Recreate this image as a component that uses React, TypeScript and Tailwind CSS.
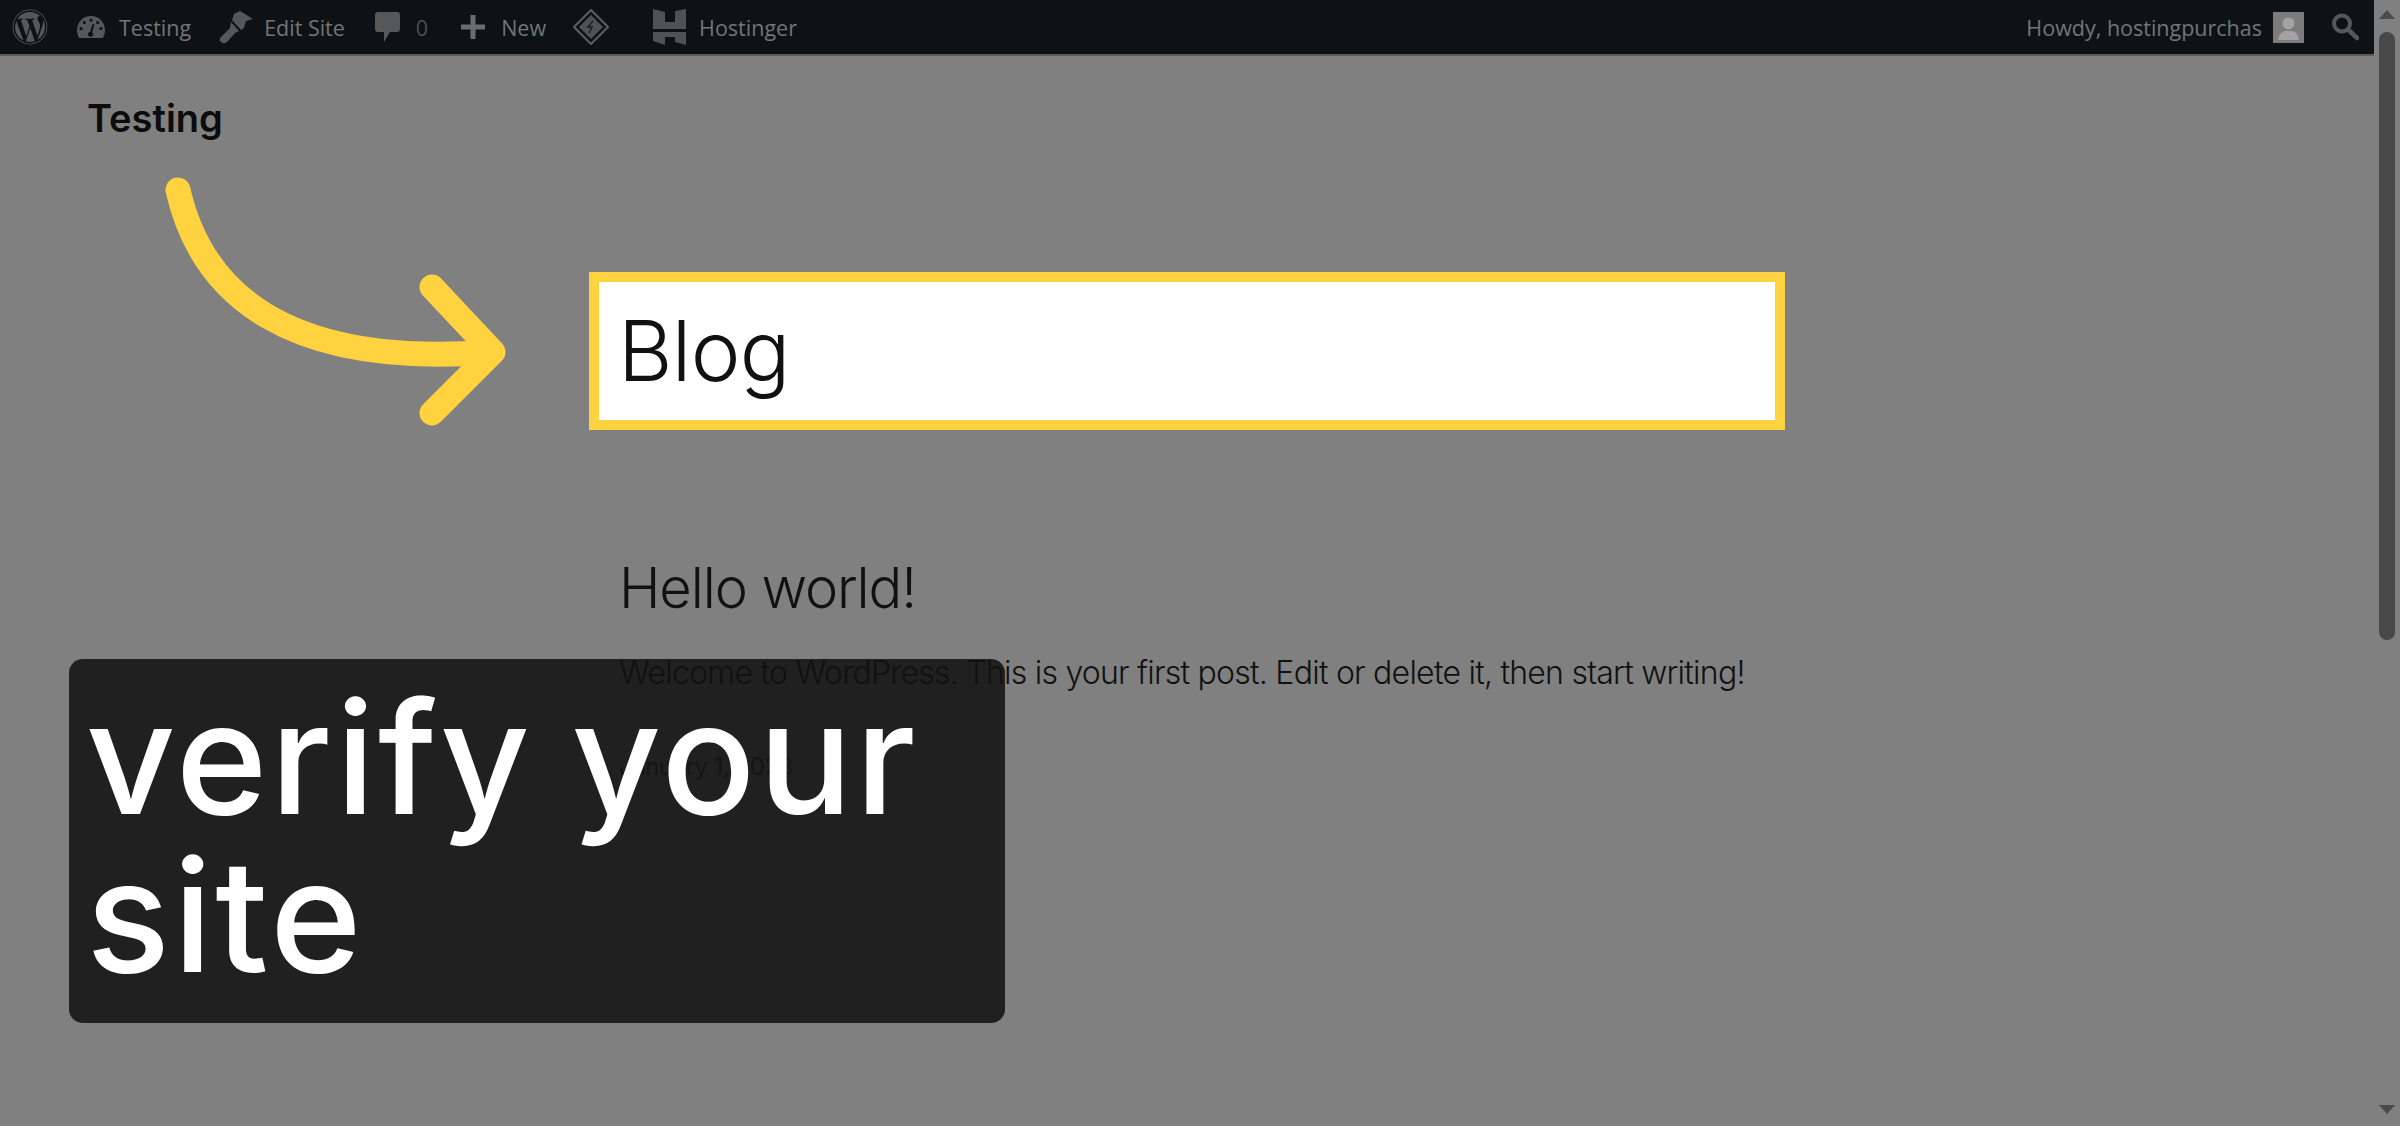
import React from 'react';
import { FaWordpress } from 'react-icons/fa';

const GaugeIcon = () => (
  <svg viewBox="0 0 28 24" className="ml-[29px] h-[24px] w-[28px] text-[#565759]" fill="currentColor">
    <path
      fillRule="evenodd"
      d="M14 1C6.3 1 0 7.2 0 15c0 2.900 .8 5.700 2.200 8h23.600C27.200 20.700 28 17.900 28 15 28 7.200 21.700 1 14 1zM14 3.500a1.600 1.600 0 1 1 0 3.200 1.600 1.600 0 0 1 0-3.200zM7.300 6a1.600 1.600 0 1 1 0 3.200 1.600 1.600 0 0 1 0-3.200zM20.700 6a1.600 1.600 0 1 1 0 3.200 1.600 1.600 0 0 1 0-3.200zM4 12a1.600 1.600 0 1 1 0 3.200A1.600 1.600 0 0 1 4 12zM24 12a1.600 1.600 0 1 1 0 3.200 1.600 1.600 0 0 1 0-3.200zM17.400 9.500l-2.200 7.700a2.600 2.600 0 1 1-2.100-.5l2.500-7.700z"
    />
  </svg>
);

const BrushIcon = () => (
  <svg viewBox="0 0 34 34" className="ml-[28px] h-[34px] w-[34px] text-[#565759]" fill="currentColor">
    <path d="M15 4 L21 1 L34 9 L27 11 L25 18 L22 20 L13 10 Z" />
    <path d="M12 12 L20 21 L16 23 L8 32 Q4 35 1 31 Q0 29 2 27 L11 18 Z" />
  </svg>
);

const CommentIcon = () => (
  <svg viewBox="0 0 25 32" className="ml-[30px] h-[32px] w-[25px] text-[#565759]" fill="currentColor">
    <path d="M3 1h19q3 0 3 3v14q0 3-3 3h-7l-6 10v-10H3q-3 0-3-3V4q0-3 3-3z" />
  </svg>
);

const DiamondIcon = () => (
  <svg viewBox="0 0 36 36" className="ml-[27px] h-[36px] w-[36px]" fill="none">
    <path d="M18 1 L35 18 L18 35 L1 18 Z" stroke="#5d5e60" strokeWidth="2" />
    <path d="M18 6 L30 18 L18 30 L6 18 Z" fill="#505154" />
    <path d="M20 12 L15 18 H19 L16 24" stroke="#1c1e20" strokeWidth="1.500" />
  </svg>
);

const HostingerIcon = () => (
  <svg viewBox="0 0 33 36" className="ml-[44px] h-[36px] w-[33px] text-[#505153]" fill="currentColor">
    <path d="M0 0 L12 3 V13 H22 V2 L33 0 V20 H0 Z" />
    <path d="M0 23 H33 V36 L22 33 V28 H12 V36 L0 32 Z" />
  </svg>
);

const SearchIcon = () => (
  <svg viewBox="0 0 28 28" className="ml-[27px] h-[28px] w-[28px]" fill="none" stroke="#56585a">
    <circle cx="11" cy="10.500" r="8" strokeWidth="4" />
    <path d="M17 16.500 L26 25" strokeWidth="4.500" strokeLinecap="round" />
  </svg>
);

const AdminBar = () => (
  <div className="flex h-[56px] items-center border-b-2 border-[#5c5c5c] bg-[#0e1215] font-['Open_Sans','Noto_Sans',sans-serif] text-[21.500px] text-[#737577]">
    <FaWordpress className="ml-[12px] h-[36px] w-[36px] text-[#565759]" />
    <GaugeIcon />
    <span className="mt-[2px] ml-[14px]">Testing</span>
    <BrushIcon />
    <span className="mt-[2px] ml-[11px]">Edit Site</span>
    <CommentIcon />
    <span className="mt-[2px] ml-[16px] text-[#4d5052]">0</span>
    <svg viewBox="0 0 24 24" className="ml-[33px] h-[24px] w-[24px] text-[#6a6c6e]" fill="currentColor">
      <path d="M9.500 0h5v9.500H24v5h-9.500V24h-5v-9.500H0v-5h9.500z" />
    </svg>
    <span className="mt-[2px] ml-[16px]">New</span>
    <DiamondIcon />
    <HostingerIcon />
    <span className="mt-[2px] ml-[13px]">Hostinger</span>
    <span className="mt-[2px] ml-auto">Howdy, hostingpurchas</span>
    <div className="ml-[11px] flex h-[31px] w-[31px] items-end justify-center overflow-hidden bg-[#7c7c7c]">
      <svg viewBox="0 0 31 31" className="h-[31px] w-[31px] text-[#a3a3a3]" fill="currentColor">
        <circle cx="15.500" cy="11.500" r="6" />
        <path d="M5 28q1-8 7-9h7q6 1 7 9z" />
      </svg>
    </div>
    <SearchIcon />
    <div className="w-[15px]" />
  </div>
);

const Scrollbar = () => (
  <div className="flex h-full w-[26px] shrink-0 flex-col items-center pt-[10px]">
    <div className="ml-[-1px] h-0 w-0 border-x-[8px] border-b-[9px] border-x-transparent border-b-[#4a4a4a]" />
    <div className="mt-[13px] h-[608px] w-[16px] rounded-full bg-[#484848]" />
    <div className="mt-auto mb-[12px] h-0 w-0 border-x-[8px] border-t-[9px] border-x-transparent border-t-[#4a4a4a]" />
  </div>
);

const CurvedArrow = () => (
  <svg
    viewBox="0 0 400 280"
    className="absolute top-[110px] left-[140px] h-[280px] w-[400px]"
    fill="none"
    stroke="#ffd23f"
    strokeWidth="25"
    strokeLinecap="round"
    strokeLinejoin="round"
  >
    <path d="M38 24 C62 130 150 202 352 186" />
    <path d="M292 121 L353 186 L292 247" />
  </svg>
);

export default function App() {
  return (
    <div className="flex h-[1126px] w-full overflow-hidden bg-[#808080] font-['Inter',sans-serif]">
      <div className="flex min-w-0 flex-1 flex-col">
        <AdminBar />
        <div className="relative flex-1">
          <header className="pt-[42px] pl-[87px] text-[38px] leading-[40px] font-semibold text-[#0c0c0c]">
            Testing
          </header>

          <CurvedArrow />

          <div className="mt-[134px] ml-[589px] flex h-[158px] w-[1196px] items-center border-[10px] border-[#ffd23f] bg-white pl-[19px] text-[84px] leading-none font-light tracking-[-0.75px] text-[#111111]">
            Blog
          </div>

          <article className="relative z-20 mt-[126px] ml-[619px] text-[#111111]">
            <h2 className="text-[56px] leading-[64px] font-light tracking-[-1.1px]">Hello world!</h2>
            <p className="mt-[31px] text-[32px] leading-[44px] font-light tracking-[-0.76px]">
              Welcome to WordPress. This is your first post. Edit or delete it, then start writing!
            </p>
            <p className="mt-[54px] text-[24px] leading-[36px] font-normal tracking-[-0.5px] text-[#151515]">
              January 1, 2023
            </p>
          </article>

          <div className="absolute top-[603px] left-[69px] h-[364px] w-[936px] rounded-[14px] bg-[#202020] px-[17px] pt-[20px] text-[156px] leading-[158px] font-medium tracking-[3px] [word-spacing:-6px] text-white">
            <div className="relative z-30">verify your site</div>
          </div>
        </div>
      </div>
      <Scrollbar />
    </div>
  );
}
